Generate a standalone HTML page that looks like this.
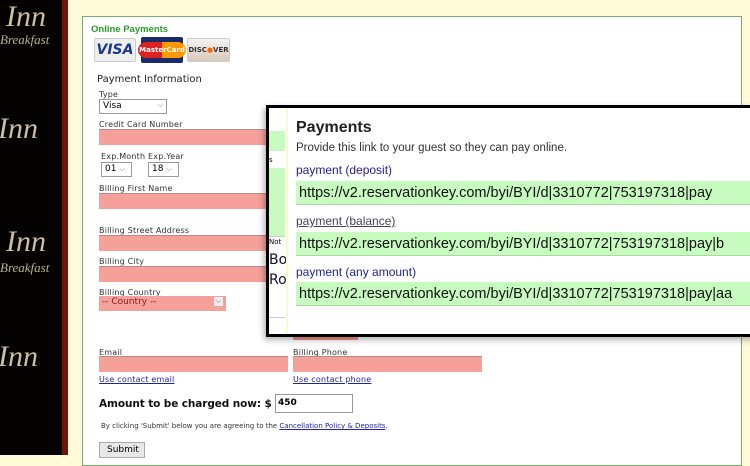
<!DOCTYPE html>
<html><head><style>
*{margin:0;padding:0;box-sizing:border-box}
body{width:750px;height:455px;overflow:hidden;background:#fffad8;font-family:"DejaVu Sans","Liberation Sans",sans-serif;position:relative}
.abs{position:absolute}
.side{left:0;top:0;width:62px;height:455px;background:#050302}
.bar{left:62px;top:0;width:6px;height:455px;background:#6e1508}
.inn{font-family:"Liberation Serif",serif;font-style:italic;color:#c8c0a0;font-size:30px}
.small{font-family:"Liberation Serif",serif;font-style:italic;color:#b8b090;font-size:13px}
.box{left:82px;top:16px;width:660px;height:450px;background:#fff;border:1px solid #7fa870}
.lbl{font-size:8px;color:#333;letter-spacing:.2px}
.inp{background:#f6a09a;border-top:1px solid #b88;height:16px}
a{color:#22a}
.card{height:24px;border-radius:2px;font-weight:bold;font-size:11px;display:flex;align-items:center;justify-content:center}
.pop{left:266px;top:105px;width:500px;height:232px;background:#fff;border:3px solid #000;box-shadow:-2px 3px 6px rgba(0,0,0,.3)}
.url{position:absolute;left:27px;width:460px;height:24px;background:#c8fbc0;font-family:"Liberation Sans",sans-serif;font-size:14.5px;color:#111;padding:4px 0 0 3px;border-bottom:1px solid #a8d8a0}
.pl{position:absolute;left:27px;font-family:"Liberation Sans",sans-serif;font-size:12px;color:#22228a}
</style></head><body>
<div class="abs side"></div>
<div class="abs bar"></div>
<div class="abs inn" style="left:6px;top:0px">Inn</div>
<div class="abs small" style="left:0px;top:32px">Breakfast</div>
<div class="abs inn" style="left:-2px;top:112px">Inn</div>
<div class="abs inn" style="left:6px;top:225px">Inn</div>
<div class="abs small" style="left:0px;top:260px">Breakfast</div>
<div class="abs inn" style="left:-2px;top:340px">Inn</div>

<div class="abs box"></div>
<div class="abs" style="left:91px;top:24px;font-family:'Liberation Sans',sans-serif;font-weight:bold;font-size:9.5px;color:#2a9a2a">Online Payments</div>
<div class="abs card" style="left:94px;top:38px;width:42px;background:#eee;color:#1a3a8a;font-size:14px;font-style:italic;border:1px solid #ccc">VISA</div>
<div class="abs card" style="left:141px;top:37px;width:42px;height:26px;background:#1a2a6a;color:#fff;font-size:7px"><span style="background:linear-gradient(90deg,#d22 50%,#f90 50%);padding:4px 1px;border-radius:8px">MasterCard</span></div>
<div class="abs card" style="left:187px;top:38px;width:43px;background:linear-gradient(#f4f4f4,#d8c8b8);color:#333;font-size:7px;border:1px solid #ccc">DISC<span style="color:#f60">●</span>VER</div>
<div class="abs" style="left:97px;top:74px;font-size:10px;color:#222">Payment Information</div>
<div class="abs lbl" style="left:99px;top:90px">Type</div>
<div class="abs" style="left:99px;top:99px;width:68px;height:15px;border:1px solid #999;font-size:9px;padding:1px 3px;background:#fff">Visa<span style="float:right;font-size:7px;color:#666">⌵</span></div>
<div class="abs lbl" style="left:99px;top:120px">Credit Card Number</div>
<div class="abs inp" style="left:99px;top:129px;width:170px"></div>
<div class="abs lbl" style="left:101px;top:152px">Exp.Month Exp.Year</div>
<div class="abs" style="left:101px;top:162px;width:31px;height:15px;border:1px solid #999;font-size:9px;padding:1px 3px">01 <span style="font-size:7px;color:#666">⌵</span></div>
<div class="abs" style="left:148px;top:162px;width:31px;height:15px;border:1px solid #999;font-size:9px;padding:1px 3px">18 <span style="font-size:7px;color:#666">⌵</span></div>
<div class="abs lbl" style="left:99px;top:184px">Billing First Name</div>
<div class="abs inp" style="left:99px;top:193px;width:170px"></div>
<div class="abs lbl" style="left:99px;top:226px">Billing Street Address</div>
<div class="abs inp" style="left:99px;top:235px;width:170px"></div>
<div class="abs lbl" style="left:99px;top:257px">Billing City</div>
<div class="abs inp" style="left:99px;top:266px;width:170px"></div>
<div class="abs lbl" style="left:99px;top:288px">Billing Country</div>
<div class="abs" style="left:99px;top:296px;width:127px;height:15px;background:#f6a09a;font-size:9px;color:#822;padding:1px 3px">-- Country --<span style="float:right;background:#eee;color:#666;font-size:7px;padding:0 2px">⌵</span></div>
<div class="abs inp" style="left:293px;top:330px;width:65px;height:10px;border:none;background:#f09088"></div>
<div class="abs lbl" style="left:99px;top:348px">Email</div>
<div class="abs inp" style="left:99px;top:356px;width:189px"></div>
<div class="abs lbl" style="left:293px;top:348px">Billing Phone</div>
<div class="abs inp" style="left:293px;top:356px;width:189px"></div>
<div class="abs lbl" style="left:99px;top:375px"><a href="#">Use contact email</a></div>
<div class="abs lbl" style="left:293px;top:375px"><a href="#">Use contact phone</a></div>
<div class="abs" style="left:99px;top:398px;font-size:10.5px;font-weight:bold;color:#111;letter-spacing:-0.1px;white-space:nowrap">Amount to be charged now: $</div>
<div class="abs" style="left:275px;top:394px;width:78px;height:19px;border:1px solid #999;font-size:9px;font-weight:bold;padding:3px 2px;background:#fff">450</div>
<div class="abs" style="left:101px;top:422px;font-size:7px;color:#333">By clicking 'Submit' below you are agreeing to the <a href="#">Cancellation Policy &amp; Deposits</a>.</div>
<div class="abs" style="left:99px;top:442px;width:46px;height:16px;background:#e8e8e8;border:1px solid #aaa;font-size:9px;padding:2px 7px">Submit</div>

<div class="abs pop">
 <div class="abs" style="left:0;top:23px;width:16px;height:20px;background:#c8fbc0"></div>
 <div class="abs" style="left:0;top:48px;font-size:7px">s</div>
 <div class="abs" style="left:0;top:60px;width:16px;height:68px;background:#c8fbc0"></div>
 <div class="abs" style="left:0;top:128px;width:16px;height:82px;background:#fff;border-top:1px solid #ccc;border-bottom:1px solid #ccc"></div>
 <div class="abs" style="left:0;top:130px;font-size:7px">Not</div>
 <div class="abs" style="left:0;top:144px;font-size:14px;color:#113">Bo</div>
 <div class="abs" style="left:0;top:164px;font-size:14px;color:#113">Ro</div>
 <div class="abs" style="left:17px;top:0;width:2px;height:226px;background:#fff8c8"></div>
 <div class="abs" style="left:27px;top:11px;font-family:'Liberation Sans',sans-serif;font-weight:bold;font-size:16px;color:#222">Payments</div>
 <div class="abs" style="left:27px;top:34px;font-family:'Liberation Sans',sans-serif;font-size:11.5px;color:#333">Provide this link to your guest so they can pay online.</div>
 <div class="pl" style="top:55px">payment (deposit)</div>
 <div class="url" style="top:73px">https://v2.reservationkey.com/byi/BYI/d|3310772|753197318|pay</div>
 <div class="pl" style="top:106px;text-decoration:underline;color:#445">payment (balance)</div>
 <div class="url" style="top:124px">https://v2.reservationkey.com/byi/BYI/d|3310772|753197318|pay|b</div>
 <div class="pl" style="top:157px">payment (any amount)</div>
 <div class="url" style="top:174px">https://v2.reservationkey.com/byi/BYI/d|3310772|753197318|pay|aa</div>
</div>
</body></html>
